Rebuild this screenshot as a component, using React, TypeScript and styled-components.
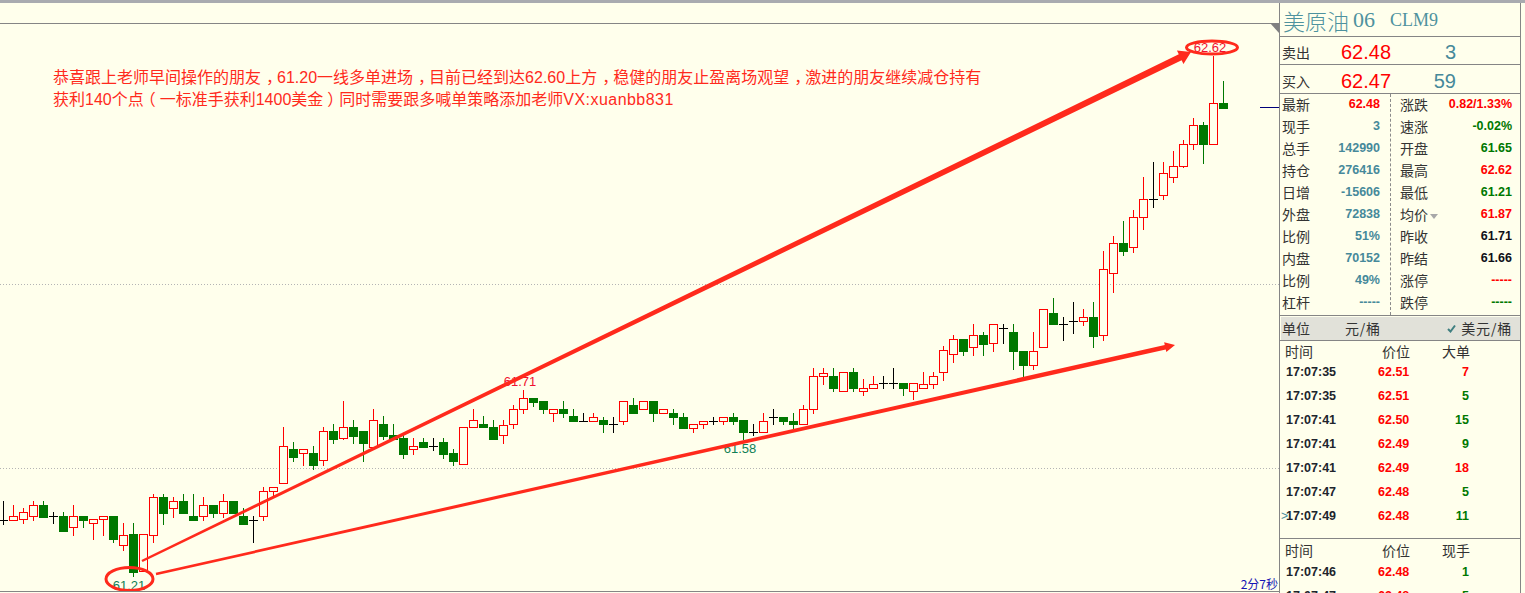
import React from "react";
import styled, { createGlobalStyle } from "styled-components";

const BG = "#ffffec";
const LINE = "#858585";
const RED = "#ff0000";
const GREEN = "#007800";
const TEAL = "#46899a";
const INK = "#20242c";
const ANNOT = "#ff2a1c";
const CJK = `"Noto Sans CJK SC", "Liberation Sans", sans-serif`;
const NUM = `"Liberation Sans", "Noto Sans CJK SC", sans-serif`;

const Global = createGlobalStyle`
  html, body { margin: 0; padding: 0; background: ${BG}; height: 593px; overflow: hidden; }
  body { font-family: ${NUM}; }
`;

const Page = styled.div`
  width: 1525px;
  height: 593px;
  overflow: hidden;
  display: flex;
  flex-direction: column;
  background: ${BG};
  border-top: 3px solid #a9abb0;
  box-sizing: border-box;
`;
const Body = styled.div`
  flex: 1;
  min-height: 0;
  display: flex;
`;
const ChartArea = styled.section`
  position: relative;
  width: 1279px;
  flex: none;
  display: flex;
  flex-direction: column;
`;
const ChartTop = styled.div`
  height: 20px;
  flex: none;
  border-bottom: 1px solid ${LINE};
`;
const ChartSvg = styled.svg`
  display: block;
  width: 1279px;
  height: 567px;
  flex: none;
  border-bottom: 1px solid ${LINE};
`;
const Corner = styled.div`
  position: absolute;
  top: 20px;
  right: 0;
  width: 0;
  height: 0;
  border-top: 10px solid #808080;
  border-left: 9px solid transparent;
`;
const Note = styled.p`
  position: absolute;
  left: 53px;
  top: 64px;
  margin: 0;
  font: 400 16px/22px ${NUM};
  color: ${ANNOT};
  white-space: nowrap;
`;
const Punct = styled.span<{ $shift: number }>`
  display: inline-block;
  transform: translateX(${(p) => p.$shift}px);
`;
const Latin = styled.span`
  letter-spacing: 0.45px;
`;
const Timer = styled.span`
  position: absolute;
  right: 1px;
  top: 574px;
  font: 400 12px/14px ${CJK};
  color: #1414b4;
  white-space: nowrap;
`;

const Panel = styled.aside`
  width: 242px;
  flex: none;
  box-sizing: border-box;
  border-left: 1px solid ${LINE};
  border-right: 1px solid ${LINE};
  display: flex;
  flex-direction: column;
`;
const Title = styled.h1`
  margin: 0;
  height: 34px;
  flex: none;
  box-sizing: border-box;
  border-bottom: 1px solid ${LINE};
  padding-left: 3px;
  display: flex;
  align-items: center;
  font: 300 22px/32px ${CJK};
  color: #4e929e;
  white-space: nowrap;
`;
const TitleNum = styled.span<{ $size: number; $gap: number }>`
  font-family: "Liberation Serif", serif;
  font-weight: 400;
  font-size: ${(p) => p.$size}px;
  margin-left: ${(p) => p.$gap}px;
`;
const Quote = styled.div<{ $h: number }>`
  height: ${(p) => p.$h}px;
  flex: none;
  box-sizing: border-box;
  border-bottom: 1px solid ${LINE};
  padding: 3px 0 0 2px;
  display: grid;
  grid-template-columns: 59px 49px 66px;
  align-items: center;
`;
const Label = styled.span`
  font: 400 14px/1 ${CJK};
  color: #333;
  white-space: nowrap;
`;
const QuotePrice = styled.span`
  font: 400 20px/1 ${NUM};
  color: ${RED};
`;
const QuoteVol = styled.span`
  font: 400 20px/1 ${NUM};
  color: ${TEAL};
  text-align: right;
`;
const Info = styled.div`
  height: 222px;
  flex: none;
  box-sizing: border-box;
  border-bottom: 1px solid ${LINE};
  display: grid;
  grid-template-columns: 111px 1fr;
`;
const InfoCol = styled.div<{ $right?: boolean }>`
  display: flex;
  flex-direction: column;
  border-right: ${(p) => (p.$right ? "none" : "1px dashed #8a8a8a")};
  height: 221px;
  padding: ${(p) => (p.$right ? "0 8px 0 9px" : "0 10px 0 2px")};
`;
const InfoRows = styled.div`
  display: flex;
  flex-direction: column;
  margin-top: -1px;
`;
const InfoRow = styled.div`
  height: 22px;
  flex: none;
  display: flex;
  align-items: center;
  justify-content: space-between;
  position: relative;
`;
const tones: Record<string, string> = { red: RED, green: GREEN, teal: TEAL, ink: "#101018" };
const Val = styled.span<{ $tone: string }>`
  font: 700 12.5px/1 ${NUM};
  color: ${(p) => tones[p.$tone]};
  white-space: nowrap;
`;
const Caret = styled.i`
  position: absolute;
  left: 30px;
  top: 11px;
  width: 0;
  height: 0;
  border-left: 4.5px solid transparent;
  border-right: 4.5px solid transparent;
  border-top: 5px solid #a8a8a8;
`;
const Unit = styled.div`
  height: 25px;
  flex: none;
  box-sizing: border-box;
  background: #e1e1d9;
  border-bottom: 1px solid ${LINE};
  padding: 0 8px 0 2px;
  display: grid;
  grid-template-columns: 63px 1fr auto;
  align-items: center;
  box-shadow: inset 1px 1px 0 ${BG};
`;
const UnitOn = styled.span`
  display: flex;
  align-items: center;
  gap: 5px;
`;
const UnitLabel = styled(Label)`
  letter-spacing: 0.8px;
`;
const Section = styled.div<{ $h: number; $line?: boolean }>`
  height: ${(p) => p.$h}px;
  flex: none;
  box-sizing: border-box;
  border-bottom: ${(p) => (p.$line ? `1px solid ${LINE}` : "none")};
  position: relative;
`;
const ListHead = styled.div<{ $h: number }>`
  height: ${(p) => p.$h}px;
  padding-left: 5px;
  display: grid;
  grid-template-columns: 97px 60px 27px;
  align-items: center;
`;
const ListHeadEnd = styled(Label)`
  text-align: right;
`;
const Tick = styled.div`
  height: 24px;
  padding-left: 6px;
  display: grid;
  grid-template-columns: 92px 40px 51px;
  align-items: center;
`;
const TickTime = styled.span`
  font: 700 12.5px/1 ${NUM};
  color: ${INK};
`;
const TickVol = styled(Val)`
  text-align: right;
`;
const Pointer = styled.span`
  position: absolute;
  left: 1px;
  top: 168px;
  font: 400 12px/14px ${NUM};
  color: ${TEAL};
`;

type C = [string, number, number, number, number];
const raw: C[] = [
["k",501,524,520,520],["r",505,520,516,520],["r",508,523,512,519],["r",501,520,505,516],["g",501,517,505,517],
["k",512,523,516,516],["g",512,531,516,531],["r",505,535,516,527],["g",516,527,516,520],["r",519,539,519,523],
["r",516,535,516,519],["g",516,542,516,539],["r",523,550,535,545],["g",523,576,534,572],["r",534,571,534,571],
["r",494,542,497,535],["g",494,524,497,513],["r",497,517,501,508],["g",494,513,501,513],["g",494,520,516,520],
["r",497,520,505,516],["g",505,517,505,513],["r",494,517,501,513],["g",501,513,501,513],["g",508,524,516,524],
["k",516,542,520,520],["r",487,520,491,516],["r",487,495,487,491],["r",427,483,446,483],["g",442,461,449,457],
["r",449,465,449,453],["g",446,469,453,465],["r",427,465,431,460],["g",424,443,431,439],["r",401,439,427,438],
["g",420,443,427,436],["g",431,461,431,443],["r",409,447,420,447],["g",416,439,424,436],["g",424,439,435,439],
["g",435,458,438,454],["r",438,454,446,449],["g",438,447,442,447],["k",438,450,446,446],["g",438,458,442,454],
["g",449,465,453,461],["r",427,464,427,464],["r",409,427,420,427],["g",416,427,424,427],["g",420,439,427,439],
["r",420,443,425,435],["r",405,428,409,424],["r",390,413,398,409],["g",398,406,398,402],["g",401,413,401,409],
["r",409,421,409,413],["g",401,417,409,413],["g",409,421,416,421],["k",413,421,421,421],["r",413,421,417,421],
["g",417,432,420,424],["k",417,432,424,424],["r",401,424,401,421],["g",398,413,405,413],["r",401,409,401,409],
["g",401,421,401,413],["r",409,413,409,413],["g",409,424,413,417],["g",413,428,417,428],["r",424,432,424,428],
["r",421,428,421,424],["k",417,424,421,421],["r",417,424,417,421],["g",413,424,417,421],["g",420,439,420,432],
["k",424,435,432,432],["r",413,432,421,432],["k",409,424,417,417],["g",417,424,417,421],["g",413,428,421,424],
["r",405,424,409,424],["r",368,413,376,409],["r",368,384,373,376],["g",368,391,376,388],["r",372,391,372,391],
["g",368,391,372,388],["r",379,395,388,391],["r",376,388,384,388],["k",376,388,383,383],["k",368,388,383,383],
["g",383,395,383,388],["r",383,399,383,391],["r",372,388,384,388],["r",372,388,376,384],["r",346,380,350,372],
["r",335,362,339,354],["g",339,355,339,351],["r",324,355,335,347],["g",332,355,335,344],["r",324,351,324,343],
["k",324,343,328,328],["g",324,369,332,351],["g",351,377,351,365],["r",332,369,351,365],["r",309,347,309,347],
["g",298,324,313,324],["k",317,340,324,324],["k",302,333,321,321],["r",309,325,317,321],["g",302,347,317,336],
["r",251,340,269,335],["r",236,292,243,273],["g",221,255,243,251],["r",210,252,217,247],["r",177,229,199,217],
["k",162,207,199,199],["r",162,199,173,195],["r",151,182,166,177],["r",140,167,144,166],["r",118,149,125,144],
["g",122,163,125,144],["r",56,144,103,144],["g",81,108,103,108],
];

function Candle({ c, i }: { c: C; i: number }) {
  const [t, hi, lo, top, bot] = c;
  const x = 3 + i * 10;
  const color = t === "r" ? RED : t === "g" ? GREEN : "#000";
  return (
    <g shapeRendering="crispEdges">
      <line x1={x + 0.5} x2={x + 0.5} y1={hi} y2={lo + 1} stroke={color} />
      {t === "k" && <line x1={x - 4} x2={x + 5} y1={top + 0.5} y2={top + 0.5} stroke={color} />}
      {t === "r" && <rect x={x - 3.5} y={top + 0.5} width={8} height={Math.max(bot - top, 1)} fill={BG} stroke={color} />}
      {t === "g" && <rect x={x - 4} y={top} width={9} height={bot - top + 1} fill={color} />}
    </g>
  );
}

function arrow(x0: number, y0: number, x1: number, y1: number, w0: number, w1: number, head: number, hw: number) {
  const len = Math.hypot(x1 - x0, y1 - y0);
  const ux = (x1 - x0) / len, uy = (y1 - y0) / len;
  const nx = -uy, ny = ux;
  const bx = x1 - ux * head, by = y1 - uy * head;
  const p: [number, number][] = [
    [x0 + nx * w0 / 2, y0 + ny * w0 / 2],
    [bx + nx * w1 / 2, by + ny * w1 / 2],
    [bx + nx * hw / 2, by + ny * hw / 2],
    [x1, y1],
    [bx - nx * hw / 2, by - ny * hw / 2],
    [bx - nx * w1 / 2, by - ny * w1 / 2],
    [x0 - nx * w0 / 2, y0 - ny * w0 / 2],
  ];
  return p.map((q) => q.join(",")).join(" ");
}

const leftRows: [string, string, string][] = [
  ["最新","62.48","red"],["现手","3","teal"],["总手","142990","teal"],["持仓","276416","teal"],["日增","-15606","teal"],
  ["外盘","72838","teal"],["比例","51%","teal"],["内盘","70152","teal"],["比例","49%","teal"],["杠杆","-----","teal"],
];
const rightRows: [string, string, string][] = [
  ["涨跌","0.82/1.33%","red"],["速涨","-0.02%","green"],["开盘","61.65","green"],["最高","62.62","red"],["最低","61.21","green"],
  ["均价","61.87","red"],["昨收","61.71","ink"],["昨结","61.66","ink"],["涨停","-----","red"],["跌停","-----","green"],
];
const ticks: [string, string, string, string][] = [
  ["17:07:35","62.51","7","red"],["17:07:35","62.51","5","green"],["17:07:41","62.50","15","green"],
  ["17:07:41","62.49","9","green"],["17:07:41","62.49","18","red"],["17:07:47","62.48","5","green"],["17:07:49","62.48","11","green"],
];
const deals: [string, string, string, string][] = [
  ["17:07:46","62.48","1","green"],["17:07:47","62.48","5","green"],
];

export default function App() {
  return (
    <>
      <Global />
      <Page>
        <Body>
          <ChartArea>
            <ChartTop />
            <ChartSvg viewBox="0 24 1279 567">
              <line x1={0} x2={1279} y1={284.5} y2={284.5} stroke="#b4b4b4" strokeDasharray="1 2" />
              <line x1={0} x2={1279} y1={468.5} y2={468.5} stroke="#b4b4b4" strokeDasharray="1 2" />
              <line x1={1260} x2={1279} y1={107.5} y2={107.5} stroke="#00007a" shapeRendering="crispEdges" />
              {raw.map((c, i) => <Candle key={i} c={c} i={i} />)}
              <g fontFamily="Liberation Sans, sans-serif" fontSize="13">
                <text x={129} y={589.5} textAnchor="middle" fill="#0f7f55">61.21</text>
                <text x={1210} y={52} textAnchor="middle" fill="#f01030">62.62</text>
                <text x={520} y={386} textAnchor="middle" fill="#f01030">61.71</text>
                <text x={740} y={452.5} textAnchor="middle" fill="#0f7f55">61.58</text>
              </g>
              <polygon points={arrow(142, 561, 1191, 52, 2.5, 6.5, 12, 15)} fill={ANNOT} />
              <polygon points={arrow(156, 574, 1175, 345, 2.5, 4.5, 10, 10)} fill={ANNOT} />
              <ellipse cx={129.5} cy={579} rx={23.5} ry={11.5} fill="none" stroke={ANNOT} strokeWidth={3} />
              <ellipse cx={1212} cy={47.5} rx={25.5} ry={6.5} fill="none" stroke={ANNOT} strokeWidth={3} />
            </ChartSvg>
            <Corner />
            <Note>
              恭喜跟上老师早间操作的朋友<Punct $shift={5}>，</Punct>61.20一线多单进场<Punct $shift={5}>，</Punct>目前已经到达62.60上方<Punct $shift={5}>，</Punct>稳健的朋友止盈离场观望<Punct $shift={5}>，</Punct>激进的朋友继续减仓持有
              <br />
              获利140个点<Punct $shift={-4}>（</Punct>一标准手获利1400美金<Punct $shift={4}>）</Punct>同时需要跟多喊单策略添加老师<Latin>VX:xuanbb831</Latin>
            </Note>
            <Timer>2分7秒</Timer>
          </ChartArea>
          <Panel>
            <Title>
              美原油<TitleNum $size={22} $gap={4}>06</TitleNum>
              <TitleNum $size={18} $gap={15}>CLM9</TitleNum>
            </Title>
            <Quote $h={28}>
              <Label>卖出</Label><QuotePrice>62.48</QuotePrice><QuoteVol>3</QuoteVol>
            </Quote>
            <Quote $h={29}>
              <Label>买入</Label><QuotePrice>62.47</QuotePrice><QuoteVol>59</QuoteVol>
            </Quote>
            <Info>
              <InfoCol>
                <InfoRows>
                  {leftRows.map(([l, v, t], i) => (
                    <InfoRow key={i}><Label>{l}</Label><Val $tone={t}>{v}</Val></InfoRow>
                  ))}
                </InfoRows>
              </InfoCol>
              <InfoCol $right>
                <InfoRows>
                  {rightRows.map(([l, v, t], i) => (
                    <InfoRow key={i}>
                      <Label>{l}</Label>
                      {l === "均价" && <Caret />}
                      <Val $tone={t}>{v}</Val>
                    </InfoRow>
                  ))}
                </InfoRows>
              </InfoCol>
            </Info>
            <Unit>
              <Label>单位</Label>
              <UnitLabel>元/桶</UnitLabel>
              <UnitOn>
                <svg width="9" height="9" viewBox="0 0 9 9">
                  <path d="M1 5 L3.5 7.5 L8 1.5" fill="none" stroke="#3f7f80" strokeWidth="2" />
                </svg>
                <UnitLabel>美元/桶</UnitLabel>
              </UnitOn>
            </Unit>
            <Section $h={198} $line>
              <ListHead $h={19}>
                <Label>时间</Label><Label>价位</Label><ListHeadEnd>大单</ListHeadEnd>
              </ListHead>
              {ticks.map(([t, p, v, c], i) => (
                <Tick key={i}>
                  <TickTime>{t}</TickTime>
                  <Val $tone="red">{p}</Val>
                  <TickVol $tone={c}>{v}</TickVol>
                </Tick>
              ))}
              <Pointer>&gt;</Pointer>
            </Section>
            <Section $h={70}>
              <ListHead $h={21}>
                <Label>时间</Label><Label>价位</Label><ListHeadEnd>现手</ListHeadEnd>
              </ListHead>
              {deals.map(([t, p, v, c], i) => (
                <Tick key={i}>
                  <TickTime>{t}</TickTime>
                  <Val $tone="red">{p}</Val>
                  <TickVol $tone={c}>{v}</TickVol>
                </Tick>
              ))}
            </Section>
          </Panel>
        </Body>
      </Page>
    </>
  );
}
